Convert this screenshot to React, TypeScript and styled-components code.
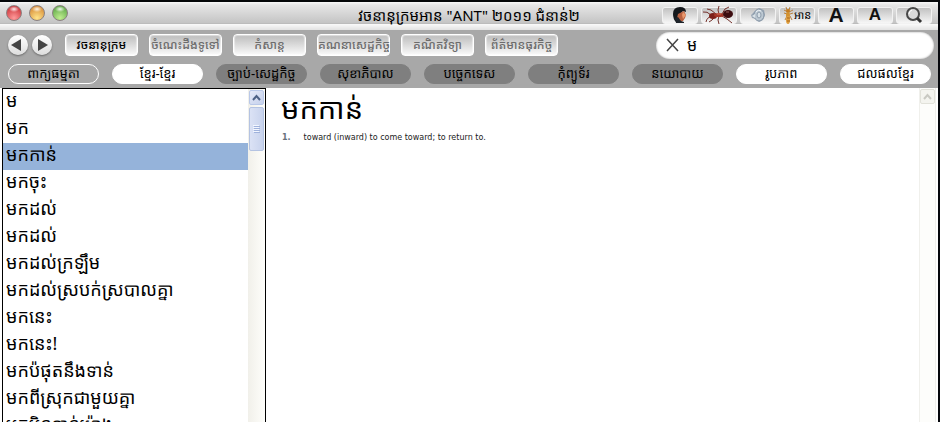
import React, { useState } from 'react';
import styled, { createGlobalStyle, css } from 'styled-components';

const khmer = '"Noto Sans Khmer", "Khmer OS", "DejaVu Sans", sans-serif';

const GlobalStyle = createGlobalStyle`
  * { box-sizing: border-box; }
  body { margin: 0; background: #fff; color: #000; font-family: ${khmer}; }
  button, input { font: inherit; color: inherit; margin: 0; padding: 0; border: 0; }
  h1, h2, p, ul, ol { margin: 0; padding: 0; font-weight: 400; }
`;

const AppWindow = styled.div`
  display: flex;
  flex-direction: column;
  height: 100vh;
  overflow: hidden;
  border-top: 2px solid #050709;
  border-right: 2px solid #05070c;
`;

const TitleBar = styled.header`
  display: grid;
  grid-template-columns: 1fr auto 1fr;
  align-items: center;
  flex: none;
  height: 28px;
  padding: 0 6px;
  background: linear-gradient(#f8f8f8 0, #e6e6e6 3px, #c4c4c4 21px, #b4b4b4 22px, #fafafa 22px, #e2e2e2 28px);
`;

const Lights = styled.div`
  display: flex;
  gap: 7px;
  padding-bottom: 6px;
`;

const Light = styled.button<{ $light: string; $dark: string }>`
  width: 16px;
  height: 16px;
  border: 1px solid #8a8080;
  border-radius: 50%;
  background:
    radial-gradient(ellipse 5px 3px at 50% 22%, #ffffffe6, #ffffff00),
    radial-gradient(circle at 50% 85%, ${p => p.$light}, ${p => p.$dark});
`;

const Title = styled.h1`
  padding-bottom: 2px;
  font-size: 15px;
  line-height: 24px;
  white-space: nowrap;
`;

const Tools = styled.div`
  display: flex;
  justify-content: flex-end;
  gap: 3px;
  padding-bottom: 2px;
`;

const Tool = styled.button`
  display: flex;
  align-items: center;
  justify-content: center;
  width: 36px;
  height: 17px;
  border: 1px solid #f2f2f2;
  border-radius: 3px;
  background: linear-gradient(#c2c2c2, #f6f6f6);
  font-size: 11px;
  line-height: 14px;
  white-space: nowrap;

  svg { flex: none; overflow: visible; }
`;

const Letter = styled.span<{ $large?: boolean }>`
  font: 700 ${p => (p.$large ? 21 : 17)}px/16px "Liberation Sans", Arial, sans-serif;
  color: #111;
`;

const Toolbar = styled.nav`
  display: flex;
  flex-direction: column;
  flex: none;
  gap: 5px;
  height: 58px;
  padding: 1px 4px 4px 8px;
  background: #a8a8a8;
`;

const ToolbarRow = styled.div`
  display: flex;
  align-items: center;
  height: 28px;
`;

const Arrow = styled.button`
  width: 20px;
  height: 20px;
  margin-right: 4px;
  border-radius: 50%;
  background: linear-gradient(#fff, #ddd);
  box-shadow: 0 1px 2px #666;

  svg { display: block; }
`;

const Sections = styled.div`
  display: flex;
  gap: 11px;
  margin-left: 9px;
`;

const Section = styled.button<{ $active?: boolean }>`
  width: 73px;
  height: 22px;
  border: 1px solid #fff;
  border-radius: 4px;
  background: linear-gradient(#bcbcbc, #fafafa);
  box-shadow: inset 0 0 1px 1px #ffffff80;
  color: ${p => (p.$active ? '#000' : '#6c6c6c')};
  font-size: 12px;
  font-weight: 500;
  line-height: 20px;
  white-space: nowrap;
`;

const SearchBox = styled.label`
  display: flex;
  align-items: center;
  width: 278px;
  height: 27px;
  margin-left: auto;
  padding: 0 10px;
  gap: 8px;
  border-radius: 14px;
  background: #fff;
  box-shadow: inset 0 0 2px #999;
`;

const Clear = styled.button`
  width: 13px;
  height: 14px;
  background: none;

  svg { display: block; }
`;

const SearchInput = styled.input`
  flex: 1;
  min-width: 0;
  height: 24px;
  background: none;
  outline: 0;
  font-size: 16px;
  line-height: 24px;
`;

const Categories = styled.div`
  display: grid;
  grid-template-columns: repeat(9, 1fr);
  gap: 13px;
  padding-right: 3px;
`;

const pillTones = {
  outline: css`background: #a8a8a8; border-color: #fff;`,
  white: css`background: #fff; border-color: #fff;`,
  dark: css`background: #7f7f7f; border-color: #7f7f7f;`,
};

const Category = styled.button<{ $tone: keyof typeof pillTones }>`
  height: 20px;
  padding-bottom: 2px;
  border: 1px solid;
  border-radius: 10px;
  ${p => pillTones[p.$tone]}
  font-size: 13px;
  line-height: 16px;
  white-space: nowrap;
`;

const Content = styled.main`
  display: flex;
  flex: 1;
  min-height: 0;
`;

const WordPane = styled.aside`
  display: flex;
  flex: 0 0 264px;
  margin-left: 2px;
  border: 1px solid #000;
  border-bottom: 0;
`;

const WordList = styled.ul`
  flex: 1;
  overflow: hidden;
  list-style: none;
`;

const Word = styled.button<{ $selected: boolean }>`
  display: block;
  width: 100%;
  height: 27px;
  padding: 0 3px 4px;
  background: ${p => (p.$selected ? '#95b3da' : 'transparent')};
  font-size: 18px;
  line-height: 23px;
  text-align: left;
  white-space: nowrap;
`;

const Track = styled.div<{ $idle?: boolean }>`
  display: flex;
  flex-direction: column;
  flex: none;
  gap: 2px;
  width: 17px;
  margin-right: ${p => (p.$idle ? 2 : 0)}px;
  padding: 1px;
  background: ${p => (p.$idle ? '#fdfdfb' : 'linear-gradient(90deg, #f1f0ea, #fefefb)')};
  box-shadow: ${p => (p.$idle ? 'inset 1px 0 #f0f0ec, inset -1px 0 #f0f0ec' : 'none')};
`;

const ScrollButton = styled.button<{ $idle?: boolean }>`
  display: flex;
  align-items: center;
  justify-content: center;
  flex: none;
  width: 15px;
  height: 15px;
  border: 1px solid ${p => (p.$idle ? '#e2e2da' : '#b9c8e8')};
  border-radius: 2px;
  background: ${p => (p.$idle ? '#f4f4ef' : 'linear-gradient(135deg, #e4e9f8, #c6d1ec)')};
  color: ${p => (p.$idle ? '#c9c9c2' : '#4d6185')};
`;

const Thumb = styled.div`
  display: flex;
  align-items: center;
  justify-content: center;
  width: 15px;
  height: 44px;
  border: 1px solid #b4c3e2;
  border-radius: 2px;
  background: linear-gradient(90deg, #dbe2f5, #c8d3ed);
`;

const Entry = styled.article`
  flex: 1;
  padding: 0 15px;
`;

const Headword = styled.h2`
  font-size: 29px;
  line-height: 40px;
`;

const Senses = styled.ol`
  list-style: none;
`;

const Sense = styled.li`
  display: flex;
  gap: 13px;
  padding-left: 1px;
  font: 8px/20px "DejaVu Sans", Verdana, sans-serif;
  color: #222;
`;

const SenseNumber = styled.b`
  color: #66717c;
`;

const Chevron = () => (
  <svg width="9" height="7" viewBox="0 0 9 7" aria-hidden="true">
    <path d="M1 6l3.500-4L8 6" fill="none" stroke="currentColor" strokeWidth="2" />
  </svg>
);

const Mask = () => (
  <svg width="16" height="16" viewBox="0 0 16 16" aria-hidden="true">
    <path d="M1 7Q1 0 8 0q6 0 6 5l-3-1-4 4 2 6-5 1Q1 12 1 7z" fill="#14181c" />
    <path d="M6 7l6-3 2 4-1 3-2 3-3 1-3-4z" fill="#b9603f" />
    <path d="M11 5l3 3-3 4-1-4z" fill="#e9986e" />
    <path d="M3 11l3-1 3 4 3 1v1H4z" fill="#1f242b" />
  </svg>
);

const Ant = () => (
  <svg width="34" height="18" viewBox="0 0 34 18" aria-hidden="true">
    <g fill="none" stroke="#74302a" strokeWidth="1">
      <path d="M9 9Q5 5 1 6M9 11Q5 11 4 16M14 8 9 4 5 3M17 8 16 4 17 0M20 8 23 3 27 1M17 10 16 14 17 18M20 10 25 13 30 17M14 10 10 14 7 16" />
    </g>
    <ellipse cx="11" cy="10" rx="4" ry="3" fill="#7d211a" />
    <ellipse cx="17" cy="9" rx="5" ry="2" fill="#a63728" />
    <ellipse cx="26" cy="8" rx="5" ry="4" fill="#3c0d10" />
    <path d="M15 8h4" stroke="#d4735b" />
    <path d="M24 6h3" stroke="#96605c" />
  </svg>
);

const Speaker = () => (
  <svg width="16" height="16" viewBox="0 0 16 16" aria-hidden="true">
    <path d="M1 8 4 5 9 1l5 2 1 5-2 5-4 2-3-3-4-1z" fill="#98a6b4" />
    <ellipse cx="9" cy="8" rx="5" ry="6" fill="#bcc8d2" stroke="#8796a6" />
    <path d="M6 5q2-3 5-1" fill="none" stroke="#eef3f6" />
    <ellipse cx="9" cy="8" rx="2" ry="3" fill="#d5dee4" stroke="#8c9baa" />
    <path d="M2 9l3-2v4z" fill="#dbe3e8" />
  </svg>
);

const Termite = () => (
  <svg width="11" height="17" viewBox="0 0 11 17" aria-hidden="true">
    <path d="M5 5 1 3M6 5l4-2M4 7 1 6m6 1 3-1M4 9 2 13m5-4 2 4M4 3 3 0m3 3 1-3" stroke="#b8813f" fill="none" />
    <ellipse cx="5" cy="4" rx="2" ry="2" fill="#c57c20" />
    <ellipse cx="5" cy="8" rx="2" ry="3" fill="#d3912f" />
    <ellipse cx="5" cy="13" rx="2" ry="4" fill="#e0a040" />
    <path d="M4 11h3M4 14h3" stroke="#a96316" />
  </svg>
);

const Magnifier = () => (
  <svg width="18" height="16" viewBox="0 0 18 16" aria-hidden="true">
    <circle cx="8" cy="7" r="6" fill="#d9d9d9" stroke="#484848" strokeWidth="2" />
    <path d="M12 11l4 4" stroke="#333" strokeWidth="3" />
    <path d="M4 7q0-3 3-4" fill="none" stroke="#fff" />
  </svg>
);

const sections = ['វចនានុក្រម', 'ចំណេះដឹងទូទៅ', 'កំសាន្ត', 'គណនាសេដ្ឋកិច្ច', 'គណិតវិទ្យា', 'ព័ត៌មានធុរកិច្ច'];

const categories: { label: string; tone: keyof typeof pillTones }[] = [
  { label: 'ពាក្យធម្មតា', tone: 'outline' },
  { label: 'ខ្មែរ-ខ្មែរ', tone: 'white' },
  { label: 'ច្បាប់-សេដ្ឋកិច្ច', tone: 'dark' },
  { label: 'សុខាភិបាល', tone: 'dark' },
  { label: 'បច្ចេកទេស', tone: 'dark' },
  { label: 'កុំព្យូទ័រ', tone: 'dark' },
  { label: 'នយោបាយ', tone: 'dark' },
  { label: 'រូបភាព', tone: 'white' },
  { label: 'ជលផលខ្មែរ', tone: 'white' },
];

const words = [
  'ម', 'មក', 'មកកាន់', 'មកចុះ', 'មកដល់', 'មកដល់', 'មកដល់ក្រឡឹម', 'មកដល់ស្របក់ស្របាលគ្នា',
  'មកនេះ', 'មកនេះ!', 'មកប៉ផុតនឹងទាន់', 'មកពីស្រុកជាមួយគ្នា', 'មកមិនទាន់ម៉ោង',
];

export default function App() {
  const [query, setQuery] = useState('ម');
  const [selected, setSelected] = useState(2);

  return (
    <>
      <GlobalStyle />
      <AppWindow lang="km">
        <TitleBar>
          <Lights>
            <Light aria-label="Close" $light="#ff9a9a" $dark="#c22026" />
            <Light aria-label="Minimize" $light="#ffe48a" $dark="#cf7a26" />
            <Light aria-label="Zoom" $light="#c0ee90" $dark="#4c9a3a" />
          </Lights>
          <Title>វចនានុក្រមអាន "ANT" ២០១១ ជំនាន់២</Title>
          <Tools>
            <Tool aria-label="Profile"><Mask /></Tool>
            <Tool aria-label="Ant"><Ant /></Tool>
            <Tool aria-label="Sound"><Speaker /></Tool>
            <Tool><Termite />អាន</Tool>
            <Tool aria-label="Larger text"><Letter $large>A</Letter></Tool>
            <Tool aria-label="Smaller text"><Letter>A</Letter></Tool>
            <Tool aria-label="Search"><Magnifier /></Tool>
          </Tools>
        </TitleBar>
        <Toolbar>
          <ToolbarRow>
            <Arrow aria-label="Back">
              <svg width="20" height="20" viewBox="0 0 20 20"><path d="M3 10l10-6v12z" fill="#444" /></svg>
            </Arrow>
            <Arrow aria-label="Forward">
              <svg width="20" height="20" viewBox="0 0 20 20"><path d="M16 10 6 4v12z" fill="#444" /></svg>
            </Arrow>
            <Sections>
              {sections.map((label, i) => <Section key={label} $active={i === 0}>{label}</Section>)}
            </Sections>
            <SearchBox>
              <Clear type="button" aria-label="Clear" onClick={() => setQuery('')}>
                <svg width="13" height="14" viewBox="0 0 13 14"><path d="M1 1l11 12M12 1 1 13" stroke="#444" strokeWidth="1.500" /></svg>
              </Clear>
              <SearchInput aria-label="Search" value={query} onChange={e => setQuery(e.target.value)} />
            </SearchBox>
          </ToolbarRow>
          <Categories>
            {categories.map(c => <Category key={c.label} $tone={c.tone}>{c.label}</Category>)}
          </Categories>
        </Toolbar>
        <Content>
          <WordPane>
            <WordList>
              {words.map((word, i) => (
                <li key={i}>
                  <Word $selected={i === selected} onClick={() => setSelected(i)}>{word}</Word>
                </li>
              ))}
            </WordList>
            <Track>
              <ScrollButton aria-label="Scroll up"><Chevron /></ScrollButton>
              <Thumb>
                <svg width="7" height="8" viewBox="0 0 7 8" shapeRendering="crispEdges" aria-hidden="true">
                  <path d="M0 0h6v1H0zM0 2h6v1H0zM0 4h6v1H0zM0 6h6v1H0z" fill="#f2f6ff" />
                  <path d="M1 1h6v1H1zM1 3h6v1H1zM1 5h6v1H1zM1 7h6v1H1z" fill="#9fb2dc" />
                </svg>
              </Thumb>
            </Track>
          </WordPane>
          <Entry>
            <Headword>មកកាន់</Headword>
            <Senses>
              <Sense lang="en"><SenseNumber>1.</SenseNumber>toward (inward) to come toward; to return to.</Sense>
            </Senses>
          </Entry>
          <Track $idle>
            <ScrollButton $idle aria-label="Scroll entry up"><Chevron /></ScrollButton>
          </Track>
        </Content>
      </AppWindow>
    </>
  );
}
